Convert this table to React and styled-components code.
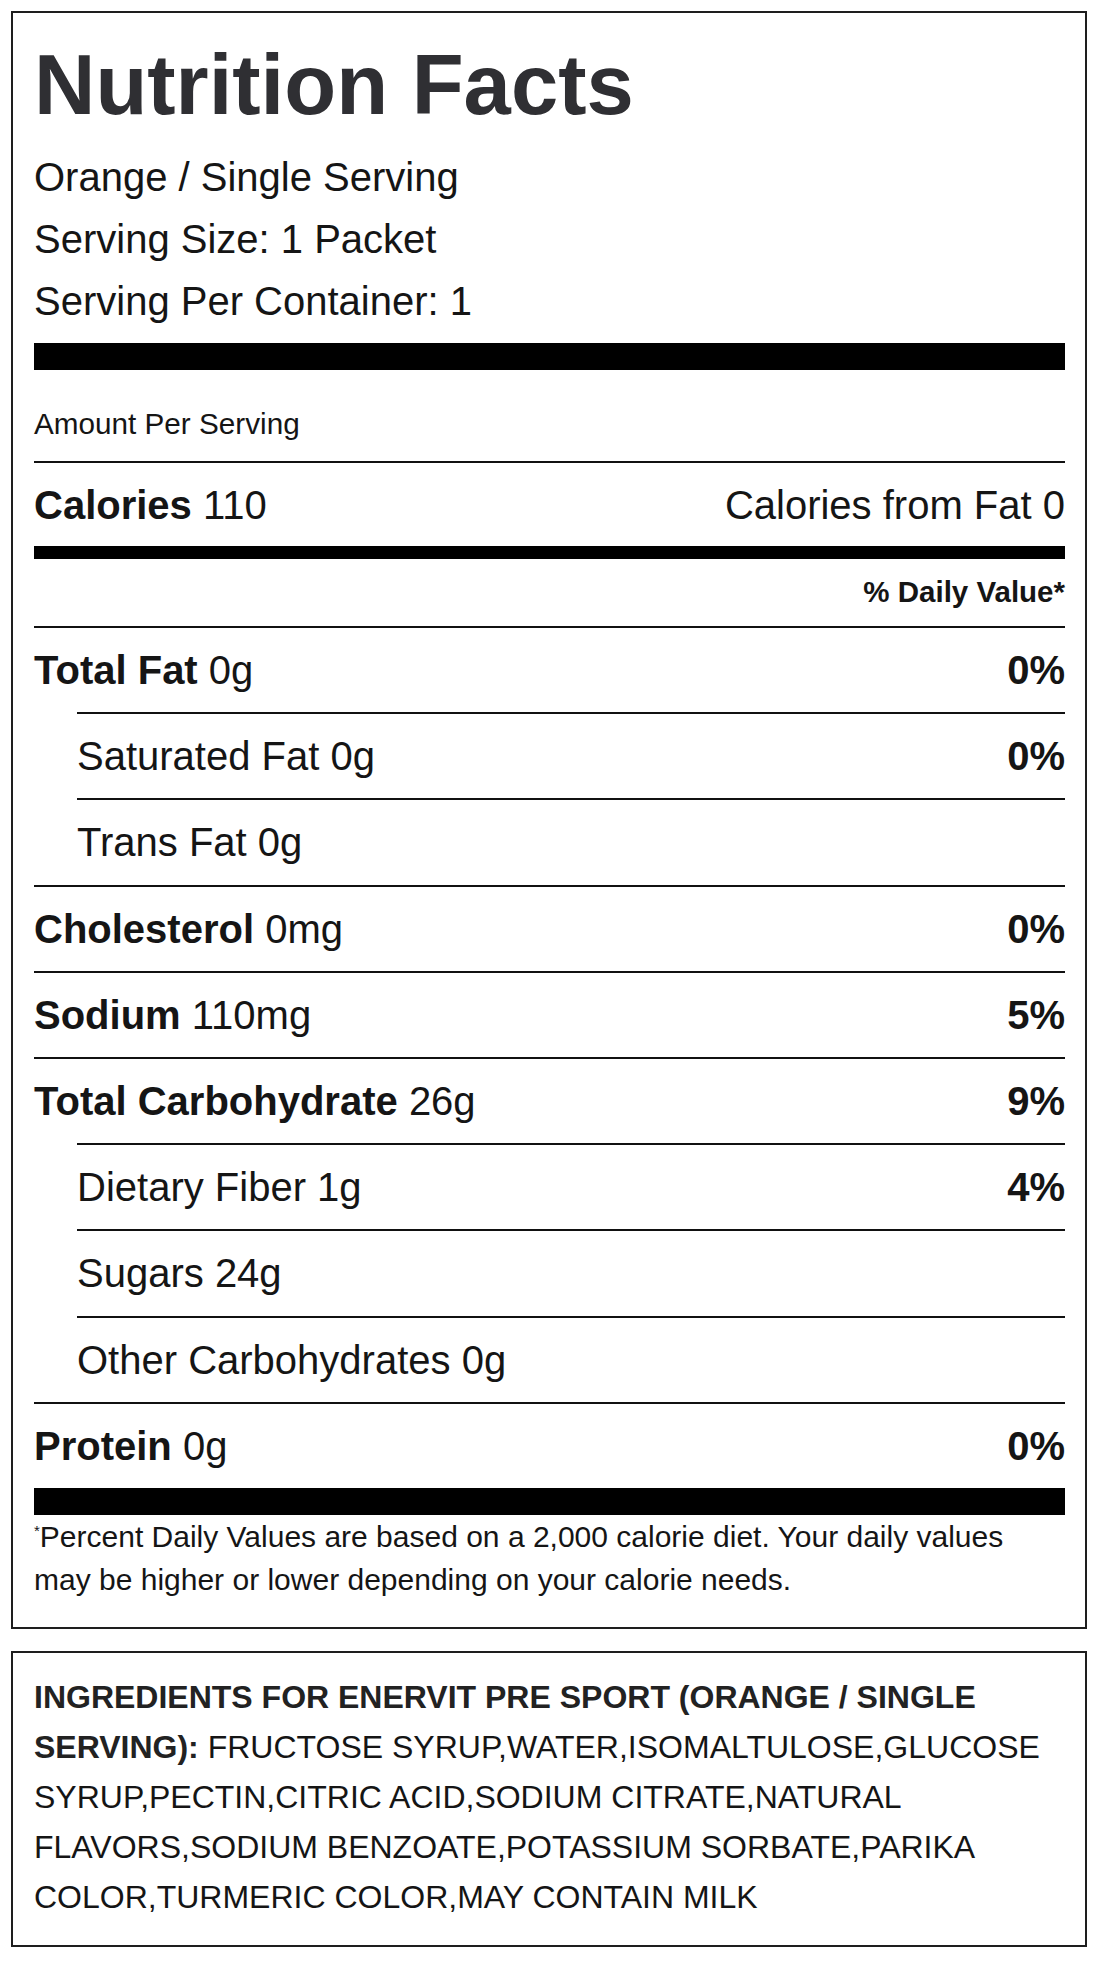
import React from 'react'
import styled, { createGlobalStyle } from 'styled-components'

const GlobalStyle = createGlobalStyle`
    body {
        margin: 0;
        background: #fff;
        font-family: "Liberation Sans", Arial, sans-serif;
        color: #151515;
    }
`

const Page = styled.div`
    width: 1076px;
    padding: 11px 13px 16px 11px;
`

const Panel = styled.section`
    box-sizing: border-box;
    border: 2px solid #1e1e1e;
    padding: 0 20px 0 21px;
    margin-bottom: ${props => props.$gap || 0}px;
`

const Title = styled.h1`
    margin: 0;
    padding-top: 29px;
    font-size: 85px;
    line-height: 85px;
    font-weight: 700;
    color: #2f2f33;
`

const Meta = styled.div`
    margin-top: 19px;
    font-size: 40px;
    line-height: 62px;
`

const Bar = styled.div`
    height: ${props => props.$h}px;
    margin-top: ${props => props.$mt || 0}px;
    background: #000;
`

const Amount = styled.div`
    padding: 34px 0 17px;
    font-size: 29.7px;
    line-height: 40px;
    border-bottom: 2px solid #111;
`

const Calories = styled.div`
    display: flex;
    justify-content: space-between;
    padding: 17px 0 16px;
    font-size: 40px;
    line-height: 50px;
    b { font-weight: 700; }
`

const DailyHead = styled.div`
    padding: 13px 0 14px;
    text-align: right;
    font-size: 29.5px;
    font-weight: 700;
    line-height: 40px;
`

const Row = styled.div`
    box-sizing: border-box;
    display: flex;
    justify-content: space-between;
    height: 86.2px;
    margin-left: ${props => props.$sub ? 43 : 0}px;
    border-top: 2px solid #111;
    font-size: 40px;
    line-height: 84px;
    b { font-weight: 700; }
`

const Pct = styled.span`
    font-weight: 700;
`

const Star = styled.span`
    display: inline-block;
    font-size: 15px;
    line-height: 15px;
    vertical-align: top;
    margin-top: 8px;
`

const Footnote = styled.p`
    margin: 0;
    max-width: 1000px;
    padding-bottom: 26px;
    font-size: 30px;
    line-height: 43px;
`

const Ingredients = styled.div`
    padding: 19px 0 23px;
    font-size: 32px;
    line-height: 50px;
`

const Lead = styled.span`
    font-weight: 700;
    color: #222;
`

const nutrients = [
    { name: 'Total Fat', amount: '0g', pct: '0%', main: true },
    { name: 'Saturated Fat', amount: '0g', pct: '0%' },
    { name: 'Trans Fat', amount: '0g' },
    { name: 'Cholesterol', amount: '0mg', pct: '0%', main: true },
    { name: 'Sodium', amount: '110mg', pct: '5%', main: true },
    { name: 'Total Carbohydrate', amount: '26g', pct: '9%', main: true },
    { name: 'Dietary Fiber', amount: '1g', pct: '4%' },
    { name: 'Sugars', amount: '24g' },
    { name: 'Other Carbohydrates', amount: '0g' },
    { name: 'Protein', amount: '0g', pct: '0%', main: true },
]

const App = () => {
    return (
        <>
            <GlobalStyle />
            <Page>
                <Panel $gap={22}>
                    <Title>Nutrition Facts</Title>
                    <Meta>
                        <div>Orange / Single Serving</div>
                        <div>Serving Size: 1 Packet</div>
                        <div>Serving Per Container: 1</div>
                    </Meta>
                    <Bar $h={27} $mt={11} />
                    <Amount>Amount Per Serving</Amount>
                    <Calories>
                        <span><b>Calories</b> 110</span>
                        <span>Calories from Fat 0</span>
                    </Calories>
                    <Bar $h={13} />
                    <DailyHead>% Daily Value*</DailyHead>
                    {
                        nutrients.map(n => (
                            <Row key={n.name} $sub={!n.main}>
                                <span>
                                    {n.main ? <b>{n.name}</b> : n.name} {n.amount}
                                </span>
                                {n.pct && <Pct>{n.pct}</Pct>}
                            </Row>
                        ))
                    }
                    <Bar $h={27} />
                    <Footnote>
                        <Star>*</Star>Percent Daily Values are based on a 2,000 calorie diet. Your daily values may be higher or lower depending on your calorie needs.
                    </Footnote>
                </Panel>
                <Panel>
                    <Ingredients>
                        <Lead>INGREDIENTS FOR ENERVIT PRE SPORT (ORANGE / SINGLE</Lead>{' '}
                        <Lead>SERVING):</Lead> FRUCTOSE SYRUP,WATER,ISOMALTULOSE,GLUCOSE SYRUP,PECTIN,CITRIC ACID,SODIUM CITRATE,NATURAL FLAVORS,SODIUM BENZOATE,POTASSIUM SORBATE,PARIKA COLOR,TURMERIC COLOR,MAY CONTAIN MILK
                    </Ingredients>
                </Panel>
            </Page>
        </>
    )
}

export default App
